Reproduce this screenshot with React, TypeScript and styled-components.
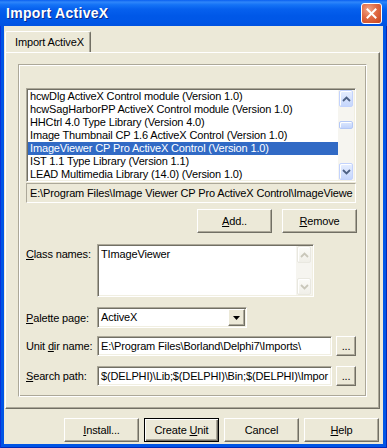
import React from "react";
import styled, { createGlobalStyle, css } from "styled-components";

const GlobalStyle = createGlobalStyle`
  * { box-sizing: border-box; }
  html, body { margin: 0; padding: 0; }
  body {
    font-family: "Liberation Sans", Arial, sans-serif;
    font-size: 11px;
    letter-spacing: -0.15px;
    color: #000;
    background: #fff;
  }
`;

const FACE = "#ECE9D8";
const LIGHT = "#F1EFE2";
const SHADOW = "#ACA899";
const DARK = "#716F64";

const raised = css`
  border: 1px solid;
  border-color: #fff ${DARK} ${DARK} #fff;
  box-shadow: inset -1px -1px ${SHADOW};
`;

const sunken = css`
  border: 1px solid;
  border-color: ${SHADOW} #fff #fff ${SHADOW};
  box-shadow: inset 1px 1px ${DARK}, inset -1px -1px ${LIGHT};
`;

const Window = styled.div`
  width: 387px;
  height: 448px;
  display: flex;
  flex-direction: column;
  background: #0055e5;
  box-shadow: inset 1px 0 #0831d9, inset -1px 0 #0028b8, inset 0 -1px #0028b8;
`;

const TitleBar = styled.div`
  height: 26px;
  flex: none;
  display: flex;
  align-items: center;
  padding: 0 5px 0 6px;
  background: linear-gradient(
    to bottom,
    #0a5ff0 0%,
    #2f86fa 8%,
    #1573f6 18%,
    #0660ee 35%,
    #0058e8 60%,
    #0056e6 85%,
    #0052e0 100%
  );
`;

const TitleText = styled.span`
  color: #fff;
  font-family: "Liberation Sans", Arial, sans-serif;
  font-weight: bold;
  font-size: 14px;
  text-shadow: 1px 1px 0 #0a2a8a;
  letter-spacing: 0.3px;
`;

const CloseButton = styled.div`
  margin-left: auto;
  margin-top: 1px;
  width: 21px;
  height: 21px;
  border: 1px solid #fff;
  border-radius: 3px;
  background: radial-gradient(circle at 35% 30%, #f0a488 0%, #e06a45 45%, #c6441c 100%);
  display: flex;
  align-items: center;
  justify-content: center;
`;

const Client = styled.div`
  flex: 1;
  margin: 0 4px 4px;
  background: ${FACE};
  display: flex;
  flex-direction: column;
`;

const PageControl = styled.div`
  flex: 1;
  display: flex;
  flex-direction: column;
  padding: 5px 3px 0 1px;
`;

const TabStrip = styled.div`
  display: flex;
  height: 21px;
  flex: none;
`;

const Tab = styled.div`
  width: 86px;
  height: 21px;
  padding: 4px 0 0 9px;
  background: ${FACE};
  border-left: 1px solid #fff;
  border-top: 1px solid #fff;
  border-right: 1px solid ${DARK};
  border-radius: 2px 2px 0 0;
  box-shadow: inset -1px 0 ${SHADOW};
  position: relative;
  z-index: 1;
  margin-bottom: -1px;
  white-space: nowrap;
`;

const Sheet = styled.div`
  flex: 1;
  border: 1px solid;
  border-color: #fff ${DARK} ${DARK} #fff;
  box-shadow: inset -1px -1px ${SHADOW};
  padding: 11px 12px 11px 12px;
  display: flex;
  flex-direction: column;
`;

const GroupBox = styled.div`
  flex: 1;
  border: 1px solid;
  border-color: ${SHADOW} #fff #fff ${SHADOW};
  box-shadow: inset 1px 1px #fff, inset -1px -1px ${SHADOW};
  padding: 23px 10px 0 7px;
  display: flex;
  flex-direction: column;
`;

const ListBox = styled.div`
  ${sunken};
  height: 94px;
  background: #fff;
  padding: 1px;
  display: flex;
  overflow: hidden;
`;

const ListItems = styled.div`
  flex: 1;
  display: flex;
  flex-direction: column;
  overflow: hidden;
`;

const ListItem = styled.div<{ $selected?: boolean }>`
  height: 13px;
  line-height: 13px;
  flex: none;
  padding-left: 2px;
  white-space: nowrap;
  background: ${(p) => (p.$selected ? "#316AC5" : "transparent")};
  color: ${(p) => (p.$selected ? "#fff" : "#000")};
`;

const ScrollBar = styled.div`
  width: 16px;
  flex: none;
  display: flex;
  flex-direction: column;
  background: #f6f5f0;
  padding: 0 1px 0 1px;
`;

const ScrollButton = styled.div<{ $disabled?: boolean }>`
  height: 17px;
  flex: none;
  border: 1px solid ${(p) => (p.$disabled ? "#e9e8e0" : "#c3d3fd")};
  border-radius: 2px;
  background: ${(p) =>
    p.$disabled
      ? "linear-gradient(to bottom, #fbfbf8, #f0efe8)"
      : "linear-gradient(to bottom, #e6eeff, #c5d6fc)"};
  box-shadow: inset 1px 1px #fff;
  display: flex;
  align-items: center;
  justify-content: center;
`;

const ScrollTrack = styled.div`
  flex: 1;
  display: flex;
  flex-direction: column;
`;

const ScrollThumb = styled.div`
  height: 8px;
  border: 1px solid #b4c8f6;
  border-radius: 2px;
  background: linear-gradient(to bottom, #dde8fe, #c2d3fb);
  box-shadow: inset 1px 1px #fff;
`;

const PathPanel = styled.div`
  margin-top: 1px;
  height: 20px;
  border: 1px solid;
  border-color: ${SHADOW} #fff #fff ${SHADOW};
  padding: 0 3px;
  line-height: 18px;
  white-space: nowrap;
  overflow: hidden;
`;

const ButtonRow = styled.div`
  margin-top: 6px;
  margin-right: -1px;
  display: flex;
  justify-content: flex-end;
  gap: 10px;
`;

const Button = styled.div<{ $default?: boolean; $width?: number }>`
  width: ${(p) => p.$width ?? 75}px;
  height: 24px;
  flex: none;
  display: flex;
  align-items: center;
  justify-content: center;
  background: ${FACE};
  ${(p) =>
    p.$default
      ? css`
          border: 1px solid #000;
          box-shadow: inset 1px 1px #fff, inset -1px -1px ${DARK}, inset -2px -2px ${SHADOW};
        `
      : raised};
`;

const SmallButton = styled.div`
  ${raised};
  width: 20px;
  height: 20px;
  flex: none;
  display: flex;
  align-items: flex-end;
  justify-content: center;
  padding-bottom: 3px;
  line-height: 11px;
  background: ${FACE};
`;

const FieldRow = styled.div<{ $top: number; $align?: string }>`
  margin-top: ${(p) => p.$top}px;
  display: flex;
  align-items: ${(p) => p.$align ?? "center"};
`;

const Label = styled.div<{ $pad?: number }>`
  width: 71px;
  flex: none;
  white-space: nowrap;
  padding-top: ${(p) => p.$pad ?? 0}px;
`;

const Memo = styled.div`
  ${sunken};
  width: 217px;
  height: 53px;
  background: #fff;
  padding: 1px;
  display: flex;
`;

const MemoText = styled.div`
  flex: 1;
  padding: 2px 0 0 2px;
`;

const Combo = styled.div`
  ${sunken};
  width: 150px;
  height: 21px;
  background: #fff;
  padding: 1px;
  display: flex;
`;

const ComboText = styled.div`
  flex: 1;
  padding-left: 2px;
  line-height: 17px;
`;

const ComboButton = styled.div`
  ${raised};
  width: 17px;
  background: ${FACE};
  display: flex;
  align-items: center;
  justify-content: center;
`;

const Edit = styled.div`
  ${sunken};
  width: 236px;
  height: 20px;
  background: #fff;
  padding: 0 3px;
  line-height: 18px;
  white-space: nowrap;
  overflow: hidden;
  margin-right: 4px;
`;

const BottomBar = styled.div`
  height: 35px;
  flex: none;
  display: flex;
  justify-content: flex-end;
  gap: 5px;
  padding: 9px 4px 0 0;
`;

const Chevron = ({ up, color }: { up?: boolean; color: string }) => (
  <svg width="9" height="6" viewBox="0 0 9 6">
    <path
      d={up ? "M1 5 L4.5 1.5 L8 5" : "M1 1 L4.5 4.5 L8 1"}
      fill="none"
      stroke={color}
      strokeWidth="1.8"
    />
  </svg>
);

const items = [
  "hcwDlg ActiveX Control module (Version 1.0)",
  "hcwSagHarborPP ActiveX Control module (Version 1.0)",
  "HHCtrl 4.0 Type Library (Version 4.0)",
  "Image Thumbnail CP 1.6 ActiveX Control (Version 1.0)",
  "ImageViewer CP Pro ActiveX Control (Version 1.0)",
  "IST 1.1 Type Library (Version 1.1)",
  "LEAD Multimedia Library (14.0) (Version 1.0)",
];

export default function App() {
  return (
    <>
      <GlobalStyle />
      <Window>
        <TitleBar>
          <TitleText>Import ActiveX</TitleText>
          <CloseButton>
            <svg width="11" height="11" viewBox="0 0 11 11">
              <path d="M1.5 1.5 L9.5 9.5 M9.5 1.5 L1.5 9.5" stroke="#fff" strokeWidth="2" strokeLinecap="square" />
            </svg>
          </CloseButton>
        </TitleBar>
        <Client>
          <PageControl>
            <TabStrip>
              <Tab>Import ActiveX</Tab>
            </TabStrip>
            <Sheet>
              <GroupBox>
                <ListBox>
                  <ListItems>
                    {items.map((t, i) => (
                      <ListItem key={t} $selected={i === 4}>
                        {t}
                      </ListItem>
                    ))}
                  </ListItems>
                  <ScrollBar>
                    <ScrollButton>
                      <Chevron up color="#4d6185" />
                    </ScrollButton>
                    <ScrollTrack>
                      <ScrollThumb style={{ marginTop: 14 }} />
                    </ScrollTrack>
                    <ScrollButton>
                      <Chevron color="#4d6185" />
                    </ScrollButton>
                  </ScrollBar>
                </ListBox>
                <PathPanel>E:\Program Files\Image Viewer CP Pro ActiveX Control\ImageViewe</PathPanel>
                <ButtonRow>
                  <Button>
                    <span>
                      <u>A</u>dd..
                    </span>
                  </Button>
                  <Button>
                    <span>
                      <u>R</u>emove
                    </span>
                  </Button>
                </ButtonRow>
                <FieldRow $top={11} $align="flex-start">
                  <Label $pad={4}>
                    <u>C</u>lass names:
                  </Label>
                  <Memo>
                    <MemoText>TImageViewer</MemoText>
                    <ScrollBar>
                      <ScrollButton $disabled>
                        <Chevron up color="#c9c7ba" />
                      </ScrollButton>
                      <ScrollTrack />
                      <ScrollButton $disabled>
                        <Chevron color="#c9c7ba" />
                      </ScrollButton>
                    </ScrollBar>
                  </Memo>
                </FieldRow>
                <FieldRow $top={10}>
                  <Label>
                    <u>P</u>alette page:
                  </Label>
                  <Combo>
                    <ComboText>ActiveX</ComboText>
                    <ComboButton>
                      <svg width="7" height="4" viewBox="0 0 7 4">
                        <path d="M0 0 H7 L3.5 4 Z" fill="#000" />
                      </svg>
                    </ComboButton>
                  </Combo>
                </FieldRow>
                <FieldRow $top={8}>
                  <Label>
                    Unit <u>d</u>ir name:
                  </Label>
                  <Edit>E:\Program Files\Borland\Delphi7\Imports\</Edit>
                  <SmallButton>...</SmallButton>
                </FieldRow>
                <FieldRow $top={10}>
                  <Label>
                    <u>S</u>earch path:
                  </Label>
                  <Edit>$(DELPHI)\Lib;$(DELPHI)\Bin;$(DELPHI)\Impor</Edit>
                  <SmallButton>...</SmallButton>
                </FieldRow>
              </GroupBox>
            </Sheet>
          </PageControl>
          <BottomBar>
            <Button>
              <span>
                <u>I</u>nstall...
              </span>
            </Button>
            <Button $default>
              <span>
                Create <u>U</u>nit
              </span>
            </Button>
            <Button>Cancel</Button>
            <Button>
              <span>
                <u>H</u>elp
              </span>
            </Button>
          </BottomBar>
        </Client>
      </Window>
    </>
  );
}
